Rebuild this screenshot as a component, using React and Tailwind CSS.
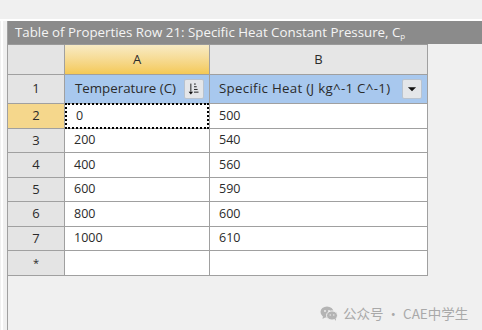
import React from "react";

const font = { fontFamily: '"Open Sans", "Noto Sans", "Noto Sans CJK SC", sans-serif' };

function SortIcon() {
  return (
    <svg width="20" height="20" viewBox="0 0 20 20">
      <line x1="6.5" y1="4" x2="6.5" y2="13" stroke="#111" strokeWidth="1" />
      <path d="M4 13 L9 13 L6.5 16 Z" fill="#111" />
      <line x1="10" y1="4.5" x2="12" y2="4.5" stroke="#111" />
      <line x1="10" y1="7.5" x2="13" y2="7.5" stroke="#111" />
      <line x1="10" y1="10.5" x2="14" y2="10.5" stroke="#111" />
      <line x1="10" y1="13.5" x2="15" y2="13.5" stroke="#111" />
    </svg>
  );
}

function DropIcon() {
  return (
    <svg width="20" height="20" viewBox="0 0 20 20">
      <path d="M5.5 8 L14.5 8 L10 12.5 Z" fill="#111" />
    </svg>
  );
}

function WeChat() {
  return (
    <svg width="18" height="15" viewBox="0 0 18 15">
      <ellipse cx="7" cy="6" rx="6.5" ry="5.5" fill="#b4b4b4" />
      <path d="M3 10 L2.5 13 L6 11 Z" fill="#b4b4b4" />
      <ellipse cx="12" cy="9.5" rx="5.5" ry="4.6" fill="#b4b4b4" stroke="#f0f0f0" strokeWidth="1" />
      <path d="M14.5 13 L16 15 L15.8 12 Z" fill="#b4b4b4" />
      <circle cx="5" cy="5" r="0.9" fill="#f0f0f0" />
      <circle cx="9" cy="5" r="0.9" fill="#f0f0f0" />
      <circle cx="10.2" cy="9" r="0.7" fill="#f0f0f0" />
      <circle cx="13.8" cy="9" r="0.7" fill="#f0f0f0" />
    </svg>
  );
}

const rows = [
  { n: "2", a: "0", b: "500", h: "h-[25px]", active: true },
  { n: "3", a: "200", b: "540", h: "h-[24px]" },
  { n: "4", a: "400", b: "560", h: "h-[25px]" },
  { n: "5", a: "600", b: "590", h: "h-[24px]" },
  { n: "6", a: "800", b: "600", h: "h-[25px]" },
  { n: "7", a: "1000", b: "610", h: "h-[24px]" },
  { n: "*", a: "", b: "", h: "h-[25px]" },
];

export default function App() {
  return (
    <div className="relative w-[482px] h-[330px] bg-[#f0f0f0] overflow-hidden flex flex-col text-[#2b2b2b]" style={font}>
      <div className="h-[21px] shrink-0 border-b-2 border-white" />
      <div className="flex flex-1">
        <div className="w-[7px] shrink-0 flex">
          <div className="w-[1px]" />
          <div className="w-[2px] bg-white" />
        </div>
        <div className="flex-1 flex flex-col border-l border-[#a0a0a0]">
          <div className="h-[23px] shrink-0 bg-[#8b8b8b] text-[#f4f4f4] text-[13.3px] leading-[23px] pl-[7px] whitespace-nowrap">
            Table of Properties Row 21: Specific Heat Constant Pressure, C<sub className="text-[8px]">p</sub>
          </div>
          <div className="w-[420px] flex flex-col border-t border-[#9a9a9a] text-[12.5px]">
            <div className="flex h-[30px] border-b border-[#a0a0a0] text-[13px]">
              <div className="w-[57px] bg-[#e4e4e4] border-r border-[#a0a0a0]" />
              <div className="w-[145px] bg-gradient-to-b from-[#f8ebc4] to-[#f4c955] border-r border-[#a0a0a0] flex items-center justify-center">A</div>
              <div className="w-[218px] bg-[#e6e6e6] border-r border-[#a0a0a0] flex items-center justify-center">B</div>
            </div>
            <div className="flex h-[29px] border-b border-[#a0a0a0] text-[13.3px]">
              <div className="w-[57px] bg-[#e4e4e4] border-r border-[#a0a0a0] flex items-center justify-center text-[13px]">1</div>
              <div className="w-[145px] bg-[#a8c8ee] border-r border-[#a0a0a0] flex items-center pl-[10px] pr-[5px]">
                <span className="flex-1 whitespace-nowrap">Temperature (C)</span>
                <div className="w-[20px] h-[20px] shrink-0 rounded-[2px] border border-[#b9c3cf] bg-[#e4e6e9] flex items-center justify-center">
                  <SortIcon />
                </div>
              </div>
              <div className="w-[218px] bg-[#a8c8ee] border-r border-[#a0a0a0] flex items-center pl-[9px] pr-[5px]">
                <span className="flex-1 whitespace-nowrap tracking-[0.3px]">Specific Heat (J kg^-1 C^-1)</span>
                <div className="w-[20px] h-[20px] shrink-0 rounded-[2px] border border-[#b9c3cf] bg-[#e4e6e9] flex items-center justify-center">
                  <DropIcon />
                </div>
              </div>
            </div>
            {rows.map((r) => (
              <div key={r.n} className={`flex ${r.h} border-b border-[#a0a0a0]`}>
                <div className={`w-[57px] border-r border-[#a0a0a0] flex items-center justify-center ${r.active ? "bg-[#f5d78c]" : "bg-[#e4e4e4]"} ${r.n === "*" ? "text-[11px]" : "text-[13px]"}`}>{r.n}</div>
                <div className="w-[145px] bg-white border-r border-[#a0a0a0] flex">
                  <div className={`flex-1 flex items-center pl-[9px] ${r.active ? "border-2 border-dotted border-black -mt-[1px] -mb-[1px]" : ""}`}>{r.a}</div>
                </div>
                <div className="w-[218px] bg-white border-r border-[#a0a0a0] flex items-center pl-[9px]">{r.b}</div>
              </div>
            ))}
          </div>
        </div>
      </div>
      <div className="absolute left-[320px] top-[303px] flex items-center gap-[5px] text-[13.5px] text-[#a9a9a9]" style={{ fontFamily: '"Noto Sans CJK SC", "Noto Sans", sans-serif' }}>
        <WeChat />
        <span>公众号 · CAE中学生</span>
      </div>
    </div>
  );
}
